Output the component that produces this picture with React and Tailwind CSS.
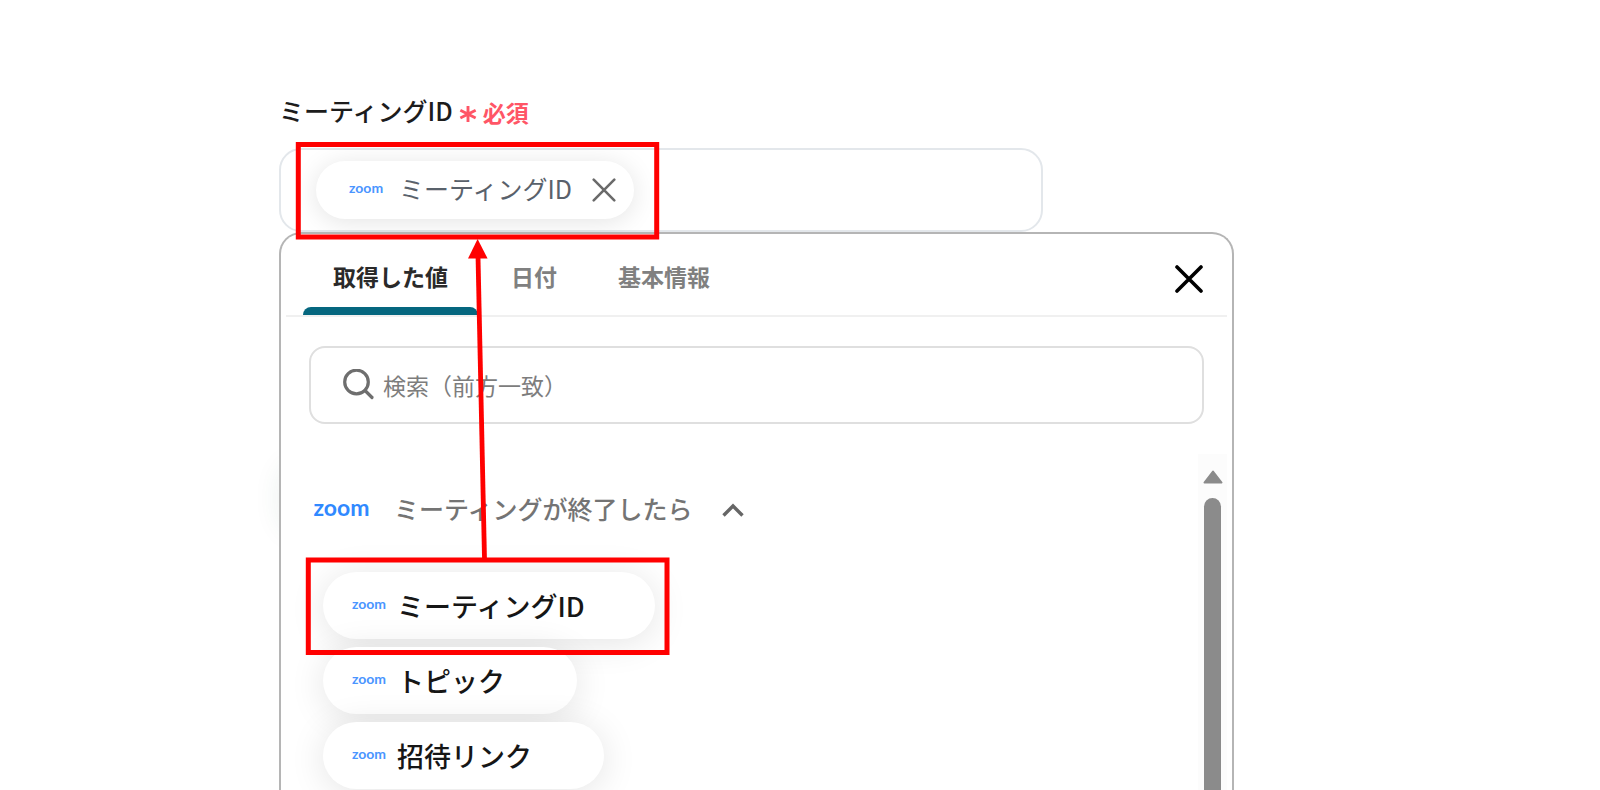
import React from "react";

const items = [
  { label: "ミーティングID", width: "w-[332px]" },
  { label: "トピック", width: "w-[254px]" },
  { label: "招待リンク", width: "w-[281px]" },
];

const tabs = ["取得した値", "日付", "基本情報"];

function SmallLogo() {
  return (
    <span className="-mt-1 w-9 shrink-0 font-['Lato',sans-serif] text-[14px] leading-4 font-bold text-[#4a95ff]">
      zoom
    </span>
  );
}

function Cross({ className, strokeWidth }) {
  return (
    <svg viewBox="0 0 28 28" className={className} fill="none" stroke="currentColor" strokeWidth={strokeWidth} strokeLinecap="round" aria-hidden="true">
      <path d="M2 2L26 26M26 2L2 26" />
    </svg>
  );
}

function Annotations() {
  return (
    <svg className="pointer-events-none absolute top-0 left-0 h-[790px] w-[1600px]" viewBox="0 0 1600 790" fill="none" aria-hidden="true">
      <rect x="298.3" y="144.5" width="358.4" height="92.5" stroke="#ff0000" strokeWidth="5" />
      <rect x="308.3" y="560" width="358.7" height="92.5" stroke="#ff0000" strokeWidth="5" />
      <path d="M484.5 559L478 256" stroke="#ff0000" strokeWidth="4.8" />
      <path d="M477.6 239L468 258.6H487.6Z" fill="#ff0000" />
    </svg>
  );
}

export default function App() {
  return (
    <main className="relative flex h-screen flex-col overflow-hidden bg-white pt-[90px] pr-6 pl-[279px] font-['Noto_Sans_CJK_JP',sans-serif]">
      <div className="absolute top-[466px] left-[284px] h-[64px] w-10 rounded-full shadow-[0_0_28px_4px_rgba(30,90,70,0.09)]" />
      <div className="flex h-[58px] shrink-0 items-start gap-[6px]">
        <h1 className="text-[25px] leading-10 font-medium text-[#1c1c1c]">ミーティングID</h1>
        <span className="flex h-11 items-center gap-[6px] text-[23px] leading-10 font-bold text-[#ff5566]">
          <svg viewBox="0 0 20 20" className="mt-1 h-[18px] w-[18px]" stroke="currentColor" strokeWidth="3.2" aria-hidden="true">
            <path d="M10 1V19M1.5 5.8L18.5 14.4M18.5 5.8L1.5 14.4" />
          </svg>
          必須
        </span>
      </div>

      <div className="flex h-[84px] w-full max-w-[764px] shrink-0 items-center rounded-[22px] border-2 border-[#e3e7eb] pl-[35px]">
        <div className="flex h-[58px] w-[318px] items-center rounded-full bg-white pl-[33px] shadow-[0_3px_26px_rgba(0,0,0,0.11)]">
          <SmallLogo />
          <span className="ml-[14px] pb-1 text-[25px] leading-9 whitespace-nowrap text-[#59616b]">ミーティングID</span>
          <button type="button" aria-label="削除" className="ml-5 text-[#6a6a6a]">
            <Cross className="h-6 w-6" strokeWidth="3" />
          </button>
        </div>
      </div>

      <section className="relative flex min-h-0 w-full max-w-[955px] flex-1 flex-col rounded-t-[22px] border-2 border-b-0 border-[#b5b5b5] bg-white">
        <div className="mx-[5px] flex h-[83px] shrink-0 items-stretch justify-between border-b-2 border-[#f0f0f0] pr-6 pl-[17px]">
          <div className="flex gap-[61px]" role="tablist">
            {tabs.map((tab, i) =>
              i === 0 ? (
                <button key={tab} type="button" role="tab" aria-selected="true" className="-mr-7 flex w-[175px] flex-col items-center justify-between text-[23px] font-bold text-[#2a2a2a]">
                  <span className="pt-6 leading-9">{tab}</span>
                  <span className="h-2 w-full rounded-t-lg bg-[#05677f]" />
                </button>
              ) : (
                <button key={tab} type="button" role="tab" aria-selected="false" className="flex flex-col text-[23px] font-bold text-[#808080]">
                  <span className="pt-6 leading-9">{tab}</span>
                </button>
              )
            )}
          </div>
          <button type="button" aria-label="閉じる" className="pt-2 text-black">
            <Cross className="h-7 w-7" strokeWidth="3.6" />
          </button>
        </div>

        <label className="mx-7 mt-[29px] flex h-[78px] shrink-0 items-center rounded-2xl border-2 border-[#dfdfdf] pl-8">
          <svg viewBox="0 0 32 32" className="h-8 w-8 shrink-0" fill="none" stroke="#6e6e6e" strokeWidth="3.2" strokeLinecap="round" aria-hidden="true">
            <circle cx="13.5" cy="13" r="11.8" />
            <path d="M22 21.5L29 28.5" />
          </svg>
          <input type="text" aria-label="検索" placeholder="検索（前方一致）" className="ml-2 min-w-0 flex-1 text-[23px] leading-9 text-[#333] outline-none placeholder:text-[#7d7d7d]" />
        </label>

        <div className="mt-[30px] flex min-h-0 flex-1 pr-[5px]">
          <div className="min-w-0 flex-1 overflow-hidden pt-[34px] pl-8">
            <button type="button" className="flex h-10 items-center text-[#747474]">
              <span className="w-[57px] pb-[2px] font-['Lato',sans-serif] text-[23px] leading-8 font-bold text-[#3089ff]">zoom</span>
              <span className="ml-6 text-[25px] leading-10 font-medium whitespace-nowrap">ミーティングが終了したら</span>
              <svg viewBox="0 0 24 16" className="mt-1 ml-7 h-4 w-6" fill="none" stroke="#666" strokeWidth="3.4" aria-hidden="true">
                <path d="M2.5 13.5L12 4L21.5 13.5" />
              </svg>
            </button>
            <ul className="mt-11 ml-[10px] flex flex-col gap-2">
              {items.map((item) => (
                <li key={item.label} className="flex">
                  <button type="button" className={`${item.width} flex h-[67px] items-center rounded-full bg-white pl-7 text-[27px] leading-10 font-medium whitespace-nowrap text-[#161616] shadow-[0_4px_36px_rgba(0,0,0,0.11)]`}>
                    <SmallLogo />
                    <span className="ml-[10px]">{item.label}</span>
                  </button>
                </li>
              ))}
            </ul>
          </div>
          <div className="flex w-[29px] shrink-0 flex-col items-center bg-[#fcfcfc] pt-4" aria-hidden="true">
            <svg viewBox="0 0 20 14" className="h-[14px] w-5 shrink-0">
              <path d="M10 1.5L18.5 12.5H1.5Z" fill="#8b8b8b" stroke="#8b8b8b" strokeWidth="2" strokeLinejoin="round" />
            </svg>
            <div className="mt-[14px] w-[17px] flex-1 rounded-t-full bg-[#8b8b8b]" />
          </div>
        </div>
      </section>

      <Annotations />
    </main>
  );
}
